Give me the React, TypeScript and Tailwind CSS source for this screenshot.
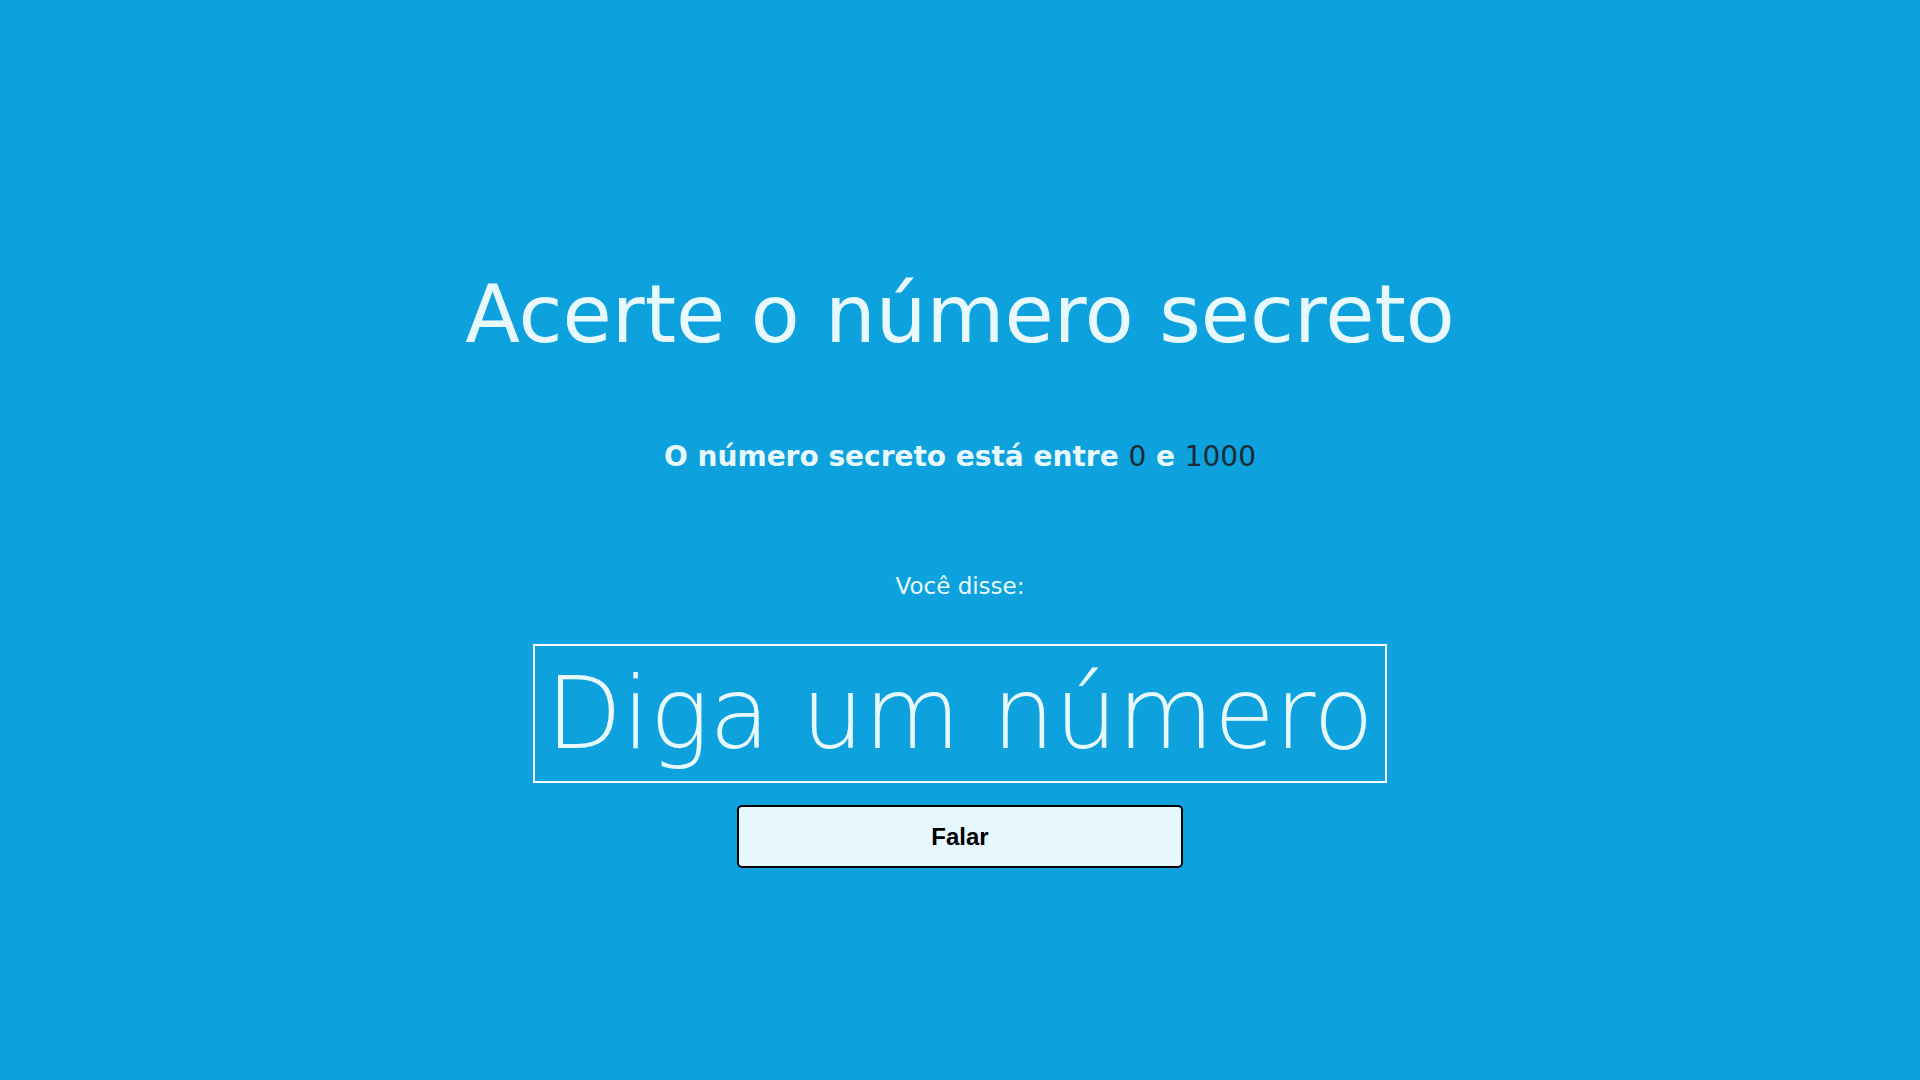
import React from "react";

export default function App() {
  return (
    <div className="min-h-screen w-full bg-[#0da2dd] text-[#e8f9fe] flex flex-col items-center text-center pt-[275px]" style={{ fontFamily: '"DejaVu Sans", sans-serif' }}>
      <h1 className="text-[80px] leading-[80px] font-normal">Acerte o número secreto</h1>
      <h3 className="mt-[88px] text-[28px] leading-[28px] font-bold">
        O número secreto está entre <span className="font-normal text-[#1b2a33]">0</span> e <span className="font-normal text-[#1b2a33]">1000</span>
      </h3>
      <p className="mt-[104px] text-[23px] leading-[23px]">Você disse:</p>
      <div className="mt-[46px] w-[854px] border-2 border-white pt-[18px] pb-[18px] text-[99px] leading-[99px] font-extralight">
        Diga um número
      </div>
      <button
        className="mt-[22px] w-[446px] h-[63px] rounded-[5px] border-2 border-black bg-[#e6f8fe] text-black text-[24px] font-bold"
        style={{ fontFamily: '"Liberation Sans", Arial, sans-serif' }}
      >
        Falar
      </button>
    </div>
  );
}
